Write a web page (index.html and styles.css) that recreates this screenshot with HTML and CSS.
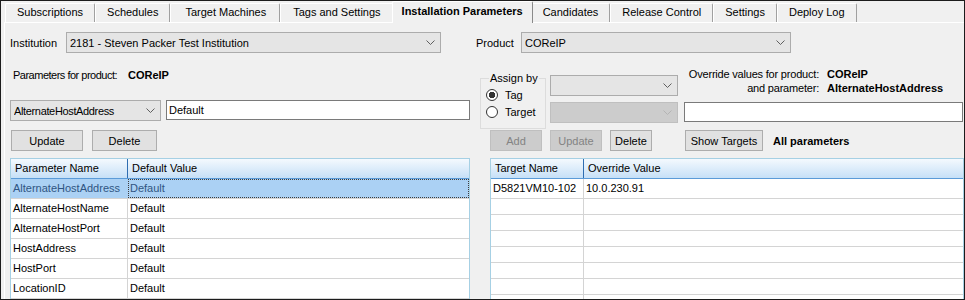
FILE: index.html
```html
<!DOCTYPE html>
<html>
<head>
<meta charset="utf-8">
<title>Installation Parameters</title>
<link rel="stylesheet" href="styles.css">
</head>
<body>
<div class="window">
  <div class="tabstrip">
    <div class="tab">Subscriptions</div>
    <div class="tab">Schedules</div>
    <div class="tab tab-wide">Target Machines</div>
    <div class="tab tab-mid">Tags and Settings</div>
    <div class="tab active">Installation Parameters</div>
    <div class="tab">Candidates</div>
    <div class="tab">Release Control</div>
    <div class="tab">Settings</div>
    <div class="tab">Deploy Log</div>
  </div>
  <div class="panel">
    <div class="col col-left">
      <div class="row1">
        <span class="lbl lbl-inst">Institution</span>
        <div class="combo combo-inst"><span class="combo-text">2181 - Steven Packer Test Institution</span><svg class="chev" viewBox="0 0 9 5"><polyline points="0.5,0.5 4.5,4.5 8.5,0.5"/></svg></div>
      </div>
      <div class="params-title"><span class="title-label">Parameters for product:</span><b>COReIP</b></div>
      <div class="edit-row">
        <div class="combo combo-param"><span class="combo-text narrow">AlternateHostAddress</span><svg class="chev" viewBox="0 0 9 5"><polyline points="0.5,0.5 4.5,4.5 8.5,0.5"/></svg></div>
        <input class="textbox textbox-default" type="text" value="Default">
      </div>
      <div class="btn-row btn-row-left">
        <button class="btn btn-update">Update</button>
        <button class="btn btn-delete">Delete</button>
      </div>
      <div class="grid grid-params">
        <div class="grid-head"><div class="cell c-pname">Parameter Name</div><div class="cell c-fill">Default Value</div></div>
        <div class="grid-row selected"><div class="cell c-pname">AlternateHostAddress</div><div class="cell c-fill focus">Default</div></div>
        <div class="grid-row"><div class="cell c-pname">AlternateHostName</div><div class="cell c-fill">Default</div></div>
        <div class="grid-row"><div class="cell c-pname">AlternateHostPort</div><div class="cell c-fill">Default</div></div>
        <div class="grid-row"><div class="cell c-pname">HostAddress</div><div class="cell c-fill">Default</div></div>
        <div class="grid-row"><div class="cell c-pname">HostPort</div><div class="cell c-fill">Default</div></div>
        <div class="grid-row"><div class="cell c-pname">LocationID</div><div class="cell c-fill">Default</div></div>
      </div>
    </div>

    <div class="col col-right">
      <div class="row1">
        <span class="lbl lbl-prod">Product</span>
        <div class="combo combo-prod"><span class="combo-text">COReIP</span><svg class="chev" viewBox="0 0 9 5"><polyline points="0.5,0.5 4.5,4.5 8.5,0.5"/></svg></div>
      </div>
      <div class="middle">
        <fieldset class="group">
          <legend>Assign by</legend>
          <div class="radio-row"><span class="radio checked"></span><span>Tag</span></div>
          <div class="radio-row"><span class="radio"></span><span>Target</span></div>
        </fieldset>
        <div class="combos">
          <div class="combo combo-assign"><span class="combo-text"></span><svg class="chev" viewBox="0 0 9 5"><polyline points="0.5,0.5 4.5,4.5 8.5,0.5"/></svg></div>
          <div class="combo combo-assign disabled"><span class="combo-text"></span><svg class="chev" viewBox="0 0 9 5"><polyline points="0.5,0.5 4.5,4.5 8.5,0.5"/></svg></div>
        </div>
        <div class="override">
          <div class="ov-labels">
            <span class="k">Override values for product:</span><span class="v">COReIP</span>
            <span class="k">and parameter:</span><span class="v">AlternateHostAddress</span>
          </div>
          <input class="textbox textbox-override" type="text" value="">
        </div>
      </div>
      <div class="btn-row btn-row-right">
        <button class="btn btn-add" disabled>Add</button>
        <button class="btn btn-upd2" disabled>Update</button>
        <button class="btn btn-del2">Delete</button>
        <button class="btn btn-show">Show Targets</button>
        <span class="all-params">All parameters</span>
      </div>
      <div class="grid grid-targets">
        <div class="grid-head"><div class="cell c-tname">Target Name</div><div class="cell c-fill">Override Value</div></div>
        <div class="grid-row"><div class="cell c-tname">D5821VM10-102</div><div class="cell c-fill">10.0.230.91</div></div>
        <div class="grid-row empty"><div class="cell c-tname"></div><div class="cell c-fill"></div></div>
        <div class="grid-row empty"><div class="cell c-tname"></div><div class="cell c-fill"></div></div>
        <div class="grid-row empty"><div class="cell c-tname"></div><div class="cell c-fill"></div></div>
        <div class="grid-row empty"><div class="cell c-tname"></div><div class="cell c-fill"></div></div>
        <div class="grid-row empty"><div class="cell c-tname"></div><div class="cell c-fill"></div></div>
        <div class="grid-row empty"><div class="cell c-tname"></div><div class="cell c-fill"></div></div>
        <div class="grid-row empty"><div class="cell c-tname"></div><div class="cell c-fill"></div></div>
      </div>
    </div>
  </div>
</div>
</body>
</html>
```

FILE: styles.css
```css
* { box-sizing: border-box; }
html, body { margin: 0; padding: 0; background: #f0f0f0; }
body {
  font-family: "Liberation Sans", Arial, sans-serif;
  font-size: 11px;
  color: #000;
}

.window {
  width: 965px;
  height: 300px;
  border: 1px solid #1c1c1c;
  background: #f0f0f0;
  overflow: hidden;
  display: flex;
  flex-direction: column;
}

/* ---------- tabs ---------- */
.tabstrip {
  flex: none;
  height: 21px;
  display: flex;
  align-items: flex-end;
  padding-left: 4px;
}
.tab {
  height: 19px;
  padding: 0 11px;
  line-height: 16px;
  white-space: nowrap;
  border-top: 1px solid #ffffff;
  border-left: 1px solid #ffffff;
  border-right: 1px solid #a0a0a0;
  border-radius: 2px 2px 0 0;
  background: #f0f0f0;
}
.tab-wide { padding: 0 13px 0 14px; }
.tab-mid { padding: 0 12px; }
.tab.active {
  position: relative;
  z-index: 1;
  height: 22px;
  margin: 0 -2px -1px;
  padding: 0 9px;
  line-height: 19px;
  font-weight: bold;
  border-right-color: #8a8a8a;
}

/* ---------- panel ---------- */
.panel {
  flex: 1;
  min-height: 0;
  margin-left: 3px;
  border-top: 1px solid #ffffff;
  border-left: 1px solid #ffffff;
  padding: 9px 0 0 5px;
  display: grid;
  grid-template-columns: 460px 1fr;
  column-gap: 5px;
}
.col {
  display: flex;
  flex-direction: column;
  min-height: 0;
}

.row1 {
  display: flex;
  align-items: center;
  height: 21px;
  flex: none;
}
.lbl { white-space: nowrap; }
.lbl-inst { width: 56px; }
.lbl-prod { width: 45px; margin-left: 1px; }

/* ---------- combo ---------- */
.combo {
  display: flex;
  align-items: center;
  height: 21px;
  border: 1px solid #acacac;
  background: #e5e5e5;
  padding: 0 5px 0 3px;
  flex: none;
}
.combo-text {
  flex: 1;
  white-space: nowrap;
  overflow: hidden;
}
.combo-text.narrow { letter-spacing: -0.35px; }
.chev {
  width: 9px;
  height: 5px;
  flex: none;
  fill: none;
  stroke: #5f5f5f;
  stroke-width: 1;
}
.combo.disabled {
  background: #cccccc;
  border-color: #bfbfbf;
}
.combo.disabled .chev { stroke: #b4b4b4; }
.combo-inst { width: 375px; }
.combo-prod { width: 270px; }
.combo-param { width: 151px; }
.combo-assign { width: 128px; }

/* ---------- text boxes ---------- */
.textbox {
  height: 20px;
  border: 1px solid #7a7a7a;
  background: #ffffff;
  padding: 0 2px;
  margin: 0;
  font: inherit;
  color: #000;
  outline: none;
}

/* ---------- left column ---------- */
.params-title {
  margin-top: 16px;
  padding-left: 3px;
  line-height: 13px;
  white-space: nowrap;
  display: flex;
  flex: none;
}
.title-label { width: 115px; flex: none; letter-spacing: -0.5px; }

.edit-row {
  display: flex;
  align-items: flex-start;
  gap: 5px;
  margin-top: 18px;
  flex: none;
}
.textbox-default { width: 304px; }

.btn-row {
  display: flex;
  align-items: center;
  height: 21px;
  margin-top: 9px;
  flex: none;
}
.btn-row-left { padding-left: 1px; gap: 9px; }

.btn {
  height: 21px;
  border: 1px solid #adadad;
  background: #e1e1e1;
  font: inherit;
  color: #000;
  padding: 0;
  margin: 0;
}
.btn:disabled {
  background: #cccccc;
  border-color: #bfbfbf;
  color: #838383;
}
.btn-update { width: 72px; }
.btn-delete { width: 65px; }

/* ---------- grids ---------- */
.grid {
  margin-top: 7px;
  flex: none;
  border: 1px solid #a6d0e4;
  background: #ffffff;
}
.grid-head {
  display: flex;
  height: 20px;
  background: linear-gradient(#f4f9fe, #c6e0f7);
  border-bottom: 1px solid #5b9bd8;
}
.grid-head .cell {
  padding-left: 4px;
  line-height: 19px;
}
.grid-row {
  display: flex;
  height: 20px;
  border-bottom: 1px solid #d4d4d4;
}
.grid-row .cell {
  padding-left: 2px;
  line-height: 19px;
  white-space: nowrap;
}
.cell { flex: none; }
.c-fill { flex: 1; }
.c-pname { width: 117px; border-right: 1px solid #d4d4d4; }
.c-tname { width: 93px; border-right: 1px solid #d4d4d4; }
.grid-head .c-pname,
.grid-head .c-tname { border-right-color: #2f6db1; }

.grid-row.selected {
  background: #abd1f4;
  color: #2f5582;
}
.grid-row.selected .c-pname { border-right-color: #abd1f4; }
.focus {
  outline: 1px dotted #3d3d3d;
  outline-offset: -1px;
}
.grid-row.empty { height: 16px; }

/* ---------- right column ---------- */
.middle {
  display: flex;
  align-items: flex-start;
  height: 77px;
  flex: none;
}
.group {
  margin: 19px 0 0 5px;
  width: 66px;
  height: 57px;
  border: 1px solid #dcdcdc;
  padding: 1px 0 0 5px;
  min-width: 0;
}
.group legend {
  padding: 0 1px;
  margin-left: 3px;
  line-height: 13px;
}
.radio-row {
  display: flex;
  align-items: center;
  gap: 7px;
  height: 17px;
}
.radio {
  width: 12px;
  height: 12px;
  border: 1px solid #333333;
  border-radius: 50%;
  background: #ffffff;
  flex: none;
}
.radio.checked {
  background: radial-gradient(circle, #333333 0 3px, #ffffff 3.5px);
}

.combos {
  margin: 22px 0 0 4px;
  display: flex;
  flex-direction: column;
  gap: 6px;
}
.override {
  margin: 14px 0 0 6px;
  flex: 1;
}
.ov-labels {
  display: grid;
  grid-template-columns: 135px auto;
  column-gap: 8px;
  line-height: 14px;
  white-space: nowrap;
}
.ov-labels .k { text-align: right; letter-spacing: -0.2px; }
.ov-labels .v { font-weight: bold; }
.textbox-override {
  margin-top: 7px;
  width: 279px;
  display: block;
}

.btn-row-right {
  margin-top: 0;
  padding-left: 15px;
  gap: 8px;
}
.btn-add { width: 52px; }
.btn-upd2 { width: 52px; }
.btn-del2 { width: 42px; }
.btn-show { width: 78px; margin-left: 25px; }
.all-params { font-weight: bold; margin-left: 2px; }

.grid-targets { margin-left: 15px; }
```
